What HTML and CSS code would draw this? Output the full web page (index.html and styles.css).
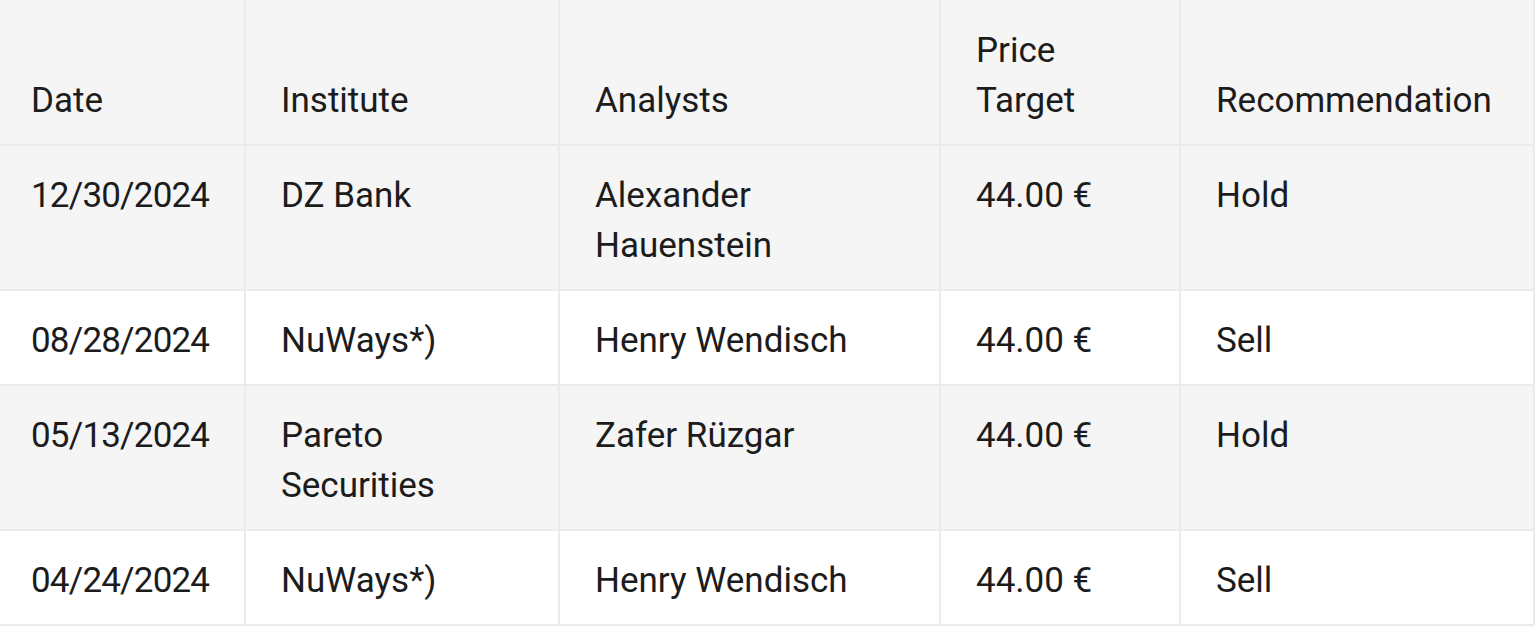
FILE: index.html
```html
<!DOCTYPE html>
<html lang="en">
<head>
<meta charset="utf-8">
<title>Analyst ratings</title>
<link rel="stylesheet" href="styles.css">
</head>
<body>
<table class="ratings">
  <colgroup>
    <col class="c-date">
    <col class="c-inst">
    <col class="c-analyst">
    <col class="c-target">
    <col class="c-rec">
  </colgroup>
  <thead>
    <tr>
      <th>Date</th>
      <th>Institute</th>
      <th>Analysts</th>
      <th>Price Target</th>
      <th>Recommendation</th>
    </tr>
  </thead>
  <tbody>
    <tr class="odd">
      <td class="num">12/30/2024</td>
      <td>DZ Bank</td>
      <td>Alexander Hauenstein</td>
      <td>44.00 €</td>
      <td>Hold</td>
    </tr>
    <tr class="even">
      <td class="num">08/28/2024</td>
      <td>NuWays*)</td>
      <td>Henry Wendisch</td>
      <td>44.00 €</td>
      <td>Sell</td>
    </tr>
    <tr class="odd">
      <td class="num">05/13/2024</td>
      <td>Pareto Securities</td>
      <td>Zafer Rüzgar</td>
      <td>44.00 €</td>
      <td>Hold</td>
    </tr>
    <tr class="even">
      <td class="num">04/24/2024</td>
      <td>NuWays*)</td>
      <td>Henry Wendisch</td>
      <td>44.00 €</td>
      <td>Sell</td>
    </tr>
  </tbody>
</table>
</body>
</html>
```

FILE: styles.css
```css
html, body {
  margin: 0;
  padding: 0;
  background: #ffffff;
}

body {
  font-family: Roboto, "Noto Sans", sans-serif;
  color: #1c1c1c;
}

.ratings {
  border-collapse: collapse;
  table-layout: fixed;
  width: 1534px;
  font-size: 35px;
  line-height: 50px;
}

.c-date { width: 245px; }
.c-inst { width: 314px; }
.c-analyst { width: 381px; }
.c-target { width: 240px; }
.c-rec { width: 354px; }

.ratings th,
.ratings td {
  text-align: left;
  font-weight: 400;
  border: 2px solid #ebebeb;
  padding: 25px 30px 18px 35px;
  vertical-align: top;
}

.ratings th {
  vertical-align: bottom;
  padding-top: 26px;
  padding-bottom: 18px;
  background: #f5f5f5;
}

.ratings th:first-child,
.ratings td:first-child {
  border-left: none;
  padding-left: 31px;
}

.ratings td.num {
  letter-spacing: -0.8px;
}

.ratings thead tr th {
  border-top: none;
}

.ratings .odd td {
  background: #f5f5f5;
}

.ratings .even td {
  background: #ffffff;
}
```
